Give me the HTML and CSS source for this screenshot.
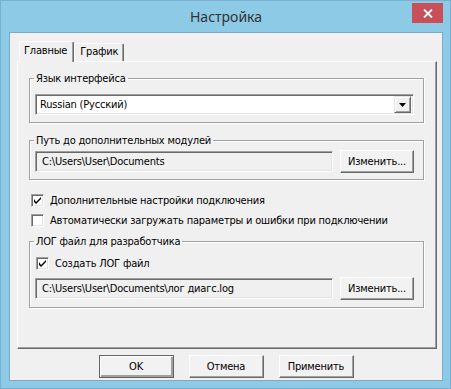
FILE: index.html
```html
<!DOCTYPE html>
<html lang="ru">
<head>
<meta charset="utf-8">
<title>Настройка</title>
<link rel="stylesheet" href="styles.css">
</head>
<body>
<div class="window">
  <div class="titlebar">
    <span class="title">Настройка</span>
    <div class="close">
      <svg width="10" height="9" viewBox="0 0 10 9"><path d="M1 0.5 L9 8.5 M9 0.5 L1 8.5" stroke="#fff" stroke-width="1.8" fill="none"/></svg>
    </div>
  </div>
  <div class="client">
    <div class="tabs">
      <div class="tab active">Главные</div>
      <div class="tab">График</div>
    </div>
    <div class="page">
      <fieldset class="group g1">
        <legend>Язык интерфейса</legend>
        <div class="combo">
          <span class="combo-text">Russian (Русский)</span>
          <span class="drop"><svg width="7" height="4" viewBox="0 0 7 4"><path d="M0 0 H7 L3.5 4 Z" fill="#000"/></svg></span>
        </div>
      </fieldset>
      <fieldset class="group g2">
        <legend>Путь до дополнительных модулей</legend>
        <div class="row">
          <div class="field">C:\Users\User\Documents</div>
          <div class="btn">Изменить...</div>
        </div>
      </fieldset>
      <div class="check c1"><span class="box on"><svg width="7" height="7" viewBox="0 0 7 7"><path d="M0 2 L0 5 L2 7 L7 2 L7 0 L2 5 Z" fill="#000"/></svg></span><span>Дополнительные настройки подключения</span></div>
      <div class="check c2"><span class="box"></span><span>Автоматически загружать параметры и ошибки при подключении</span></div>
      <fieldset class="group g3">
        <legend>ЛОГ файл для разработчика</legend>
        <div class="check c3"><span class="box on"><svg width="7" height="7" viewBox="0 0 7 7"><path d="M0 2 L0 5 L2 7 L7 2 L7 0 L2 5 Z" fill="#000"/></svg></span><span>Создать ЛОГ файл</span></div>
        <div class="row r3">
          <div class="field">C:\Users\User\Documents\лог диагс.log</div>
          <div class="btn">Изменить...</div>
        </div>
      </fieldset>
    </div>
    <div class="buttons">
      <div class="btn big default">OK</div>
      <div class="btn big">Отмена</div>
      <div class="btn big">Применить</div>
    </div>
  </div>
</div>
</body>
</html>
```
FILE: styles.css
```css
* { box-sizing: border-box; }
html, body { margin: 0; padding: 0; }
body {
  width: 451px; height: 389px; overflow: hidden;
  font-family: "DejaVu Sans", sans-serif;
  font-stretch: condensed;
  font-size: 11px;
  letter-spacing: -0.2px;
  color: #000;
}
.window {
  width: 451px; height: 389px;
  background: #8ccae6;
  border: 1px solid #79afd1;
  padding: 0 7px 7px 8px;
  display: flex; flex-direction: column;
}
.titlebar {
  height: 31px; position: relative;
  display: flex; align-items: center; justify-content: center;
}
.title {
  font-family: "Noto Sans", sans-serif; font-stretch: normal;
  font-size: 14px; letter-spacing: 0; color: #333;
}
.close {
  position: absolute; top: 2px; right: 0;
  width: 31px; height: 20px;
  background: #c7505a;
  display: flex; align-items: center; justify-content: center;
}
.close svg { display: block; }
.client {
  flex: 1;
  background: #f0f0f0;
  border: 1px solid #7fa9c9;
  display: flex; flex-direction: column;
}
.tabs {
  display: flex; align-items: flex-end;
  height: 21px; margin: 8px 0 -1px 9px;
  position: relative; z-index: 1;
}
.tab {
  height: 18px; margin-bottom: 1px;
  padding: 0 5px 0 5px;
  border-top: 1px solid #fff; border-left: 1px solid #fff;
  border-right: 1px solid #696969;
  box-shadow: inset -1px 0 0 #a0a0a0;
  border-radius: 2px 2px 0 0;
  line-height: 16px;
  background: #f0f0f0;
}
.tab.active {
  height: 21px; margin-bottom: 0;
  padding: 0 6px 0 4px;
  line-height: 18px;
}
.page {
  margin-left: 7px; width: 420px; height: 288px;
  border-top: 1px solid #fff; border-left: 1px solid #fff;
  border-right: 1px solid #696969; border-bottom: 1px solid #696969;
  box-shadow: inset -1px -1px 0 #a0a0a0;
  padding: 10px 0 0 11px;
  display: flex; flex-direction: column; align-items: flex-start;
}
.group {
  margin: 0; min-width: 0; width: 395px;
  border: 1px solid #a0a0a0;
  box-shadow: inset 1px 1px 0 #fff, 1px 1px 0 #fff;
  padding: 9px 8px 7px 4px;
}
.group legend {
  padding: 0 2px; line-height: 13px; height: 13px;
}
.g2 { margin-top: 11px; padding-top: 3px; padding-bottom: 6px; }
.g3 { margin-top: 8px; padding-top: 9px; padding-bottom: 7px; }
.combo {
  margin-left: 1px; width: 379px; height: 21px;
  background: #fff;
  border-top: 1px solid #a0a0a0; border-left: 1px solid #a0a0a0;
  border-right: 1px solid #fff; border-bottom: 1px solid #fff;
  box-shadow: inset 1px 1px 0 #696969, inset -1px -1px 0 #e3e3e3;
  display: flex; align-items: center; justify-content: space-between;
  padding: 2px 2px 2px 4px;
}
.drop {
  width: 17px; height: 17px;
  background: #f0f0f0;
  border-top: 1px solid #e3e3e3; border-left: 1px solid #e3e3e3;
  border-right: 1px solid #696969; border-bottom: 1px solid #696969;
  box-shadow: inset 1px 1px 0 #fff, inset -1px -1px 0 #a0a0a0;
  display: flex; align-items: center; justify-content: center;
}
.drop svg { display: block; }
.row { display: flex; align-items: center; gap: 7px; margin-left: 1px; }
.field {
  width: 298px; height: 21px;
  background: #f0f0f0;
  border-top: 1px solid #a0a0a0; border-left: 1px solid #a0a0a0;
  border-right: 1px solid #fff; border-bottom: 1px solid #fff;
  box-shadow: inset 1px 1px 0 #696969, inset -1px -1px 0 #e3e3e3;
  padding: 0 0 0 6px; line-height: 19px;
  white-space: nowrap;
}
.btn {
  width: 74px; height: 23px;
  background: #f2f2f2;
  border-top: 1px solid #fff; border-left: 1px solid #fff;
  border-right: 1px solid #696969; border-bottom: 1px solid #696969;
  box-shadow: inset -1px -1px 0 #a0a0a0;
  display: flex; align-items: center; justify-content: center;
}
.btn.big { width: 75px; }
.btn.default {
  border: 1px solid #646464;
  box-shadow: inset 1px 1px 0 #fff, inset -2px -2px 0 #a0a0a0;
}
.check { display: flex; align-items: center; gap: 6px; height: 13px; white-space: nowrap; }
.c1 { margin: 14px 0 0 2px; }
.c2 { margin: 7px 0 0 2px; }
.c3 { margin-left: 2px; }
.r3 { margin-top: 7px; }
.box {
  width: 13px; height: 13px; flex: none;
  background: #fff;
  border-top: 1px solid #a0a0a0; border-left: 1px solid #a0a0a0;
  border-right: 1px solid #fff; border-bottom: 1px solid #fff;
  box-shadow: inset 1px 1px 0 #696969, inset -1px -1px 0 #e3e3e3;
  display: flex; align-items: center; justify-content: center;
}
.box svg { display: block; }
.buttons {
  display: flex; justify-content: center; gap: 15px;
  margin-top: 6px;
}
```
